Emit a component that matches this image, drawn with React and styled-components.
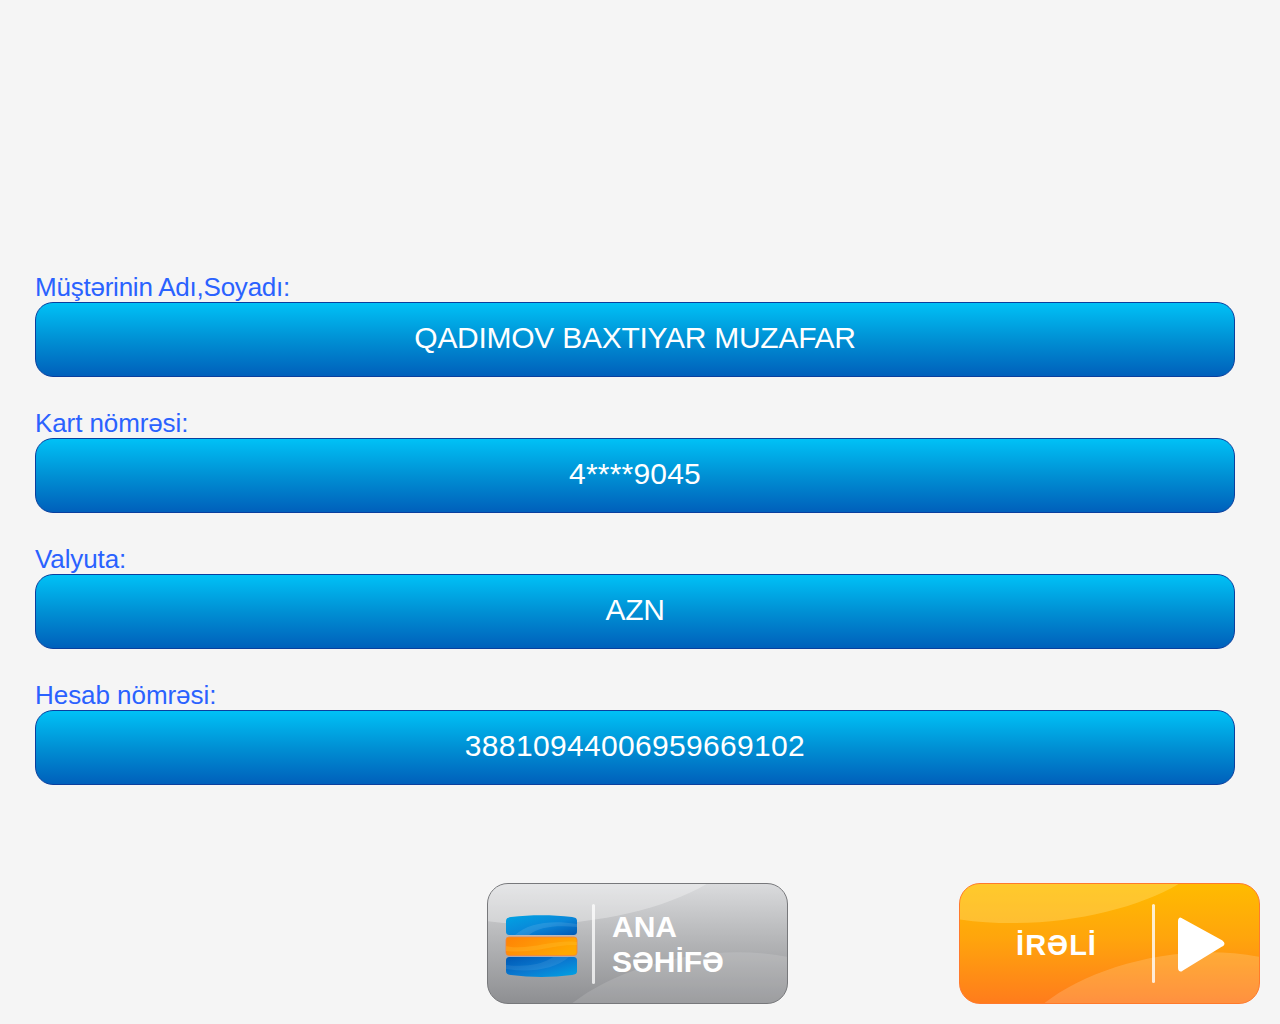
import React from "react";
import styled, { createGlobalStyle } from "styled-components";

const GlobalStyle = createGlobalStyle`
  html, body {
    margin: 0;
    padding: 0;
    background: #f5f5f5;
  }
  body {
    font-family: "Liberation Sans", Arial, sans-serif;
  }
`;

const Page = styled.div`
  width: 1280px;
  height: 1024px;
  overflow: hidden;
  display: flex;
  flex-direction: column;
  padding: 272px 20px 20px 35px;
  box-sizing: border-box;
`;

const Form = styled.div`
  display: flex;
  flex-direction: column;
  gap: 31px;
`;

const Field = styled.div`
  display: flex;
  flex-direction: column;
  width: 1200px;
`;

const Label = styled.div`
  height: 30px;
  line-height: 30px;
  font-size: 26px;
  letter-spacing: ${(p) => p.$track || 0}px;
  color: #2a62ff;
`;

const Value = styled.div`
  height: 75px;
  box-sizing: border-box;
  display: flex;
  align-items: center;
  justify-content: center;
  padding-bottom: 3px;
  border: 1px solid #0a3f9e;
  border-radius: 18px;
  background: linear-gradient(to bottom, #00c1f6 0%, #0090d4 50%, #0060bb 100%);
  color: #fff;
  font-size: 30px;
  letter-spacing: ${(p) => p.$track || 0}px;
`;

const Actions = styled.div`
  margin-top: auto;
  display: flex;
  justify-content: flex-end;
  gap: 171px;
`;

const BigButton = styled.div`
  position: relative;
  overflow: hidden;
  width: 301px;
  height: 121px;
  box-sizing: border-box;
  border-radius: 21px;
  border: 1px solid ${(p) => (p.$orange ? "#ff7a2c" : "#77787b")};
  background: ${(p) =>
    p.$orange
      ? "linear-gradient(to bottom, #ffbb00 0%, #ffa50c 45%, #ff7c1c 100%)"
      : "linear-gradient(to bottom, #dadbdd 0%, #b6b7b9 45%, #8e8f92 100%)"};
  display: flex;
  align-items: center;
  color: #fff;
  font-weight: bold;
`;

const Gloss = styled.svg`
  position: absolute;
  inset: 0;
  width: 100%;
  height: 100%;
`;

const Divider = styled.div`
  position: relative;
  flex: none;
  width: 3px;
  height: ${(p) => p.$h}px;
  margin: ${(p) => p.$m};
  border-radius: 2px;
  background: rgba(255, 255, 255, ${(p) => p.$a});
`;

const HomeIcon = styled.svg`
  position: relative;
  flex: none;
  width: 73px;
  height: 62px;
  margin-left: 17px;
  margin-top: 5px;
`;

const HomeText = styled.div`
  position: relative;
  font-size: 30px;
  line-height: 35px;
  margin-left: 17px;
  margin-top: 1px;
`;

const NextText = styled.div`
  position: relative;
  flex: none;
  width: 193px;
  text-align: center;
  font-size: 29px;
  letter-spacing: 1px;
  margin-top: 4px;
`;

const PlayIcon = styled.svg`
  position: relative;
  flex: none;
  width: 50px;
  height: 56px;
  margin-left: 23px;
`;

const rows = [
  { label: "Müştərinin Adı,Soyadı:", labelTrack: -0.23, value: "QADIMOV BAXTIYAR MUZAFAR", track: -0.27 },
  { label: "Kart nömrəsi:", labelTrack: -0.1, value: "4****9045", track: 0.2 },
  { label: "Valyuta:", labelTrack: -0.1, value: "AZN", track: -0.3 },
  { label: "Hesab nömrəsi:", labelTrack: -0.05, value: "38810944006959669102", track: 0.33 },
];

function StackIcon() {
  return (
    <HomeIcon viewBox="0 0 73 62">
      <defs>
        <linearGradient id="blueA" x1="0" y1="0" x2="1" y2="1">
          <stop offset="0" stopColor="#00a4e4" />
          <stop offset="0.55" stopColor="#0a86d8" />
          <stop offset="1" stopColor="#0058b4" />
        </linearGradient>
        <linearGradient id="blueB" x1="0" y1="0" x2="1" y2="1">
          <stop offset="0" stopColor="#0058b4" />
          <stop offset="0.55" stopColor="#0a7cd2" />
          <stop offset="1" stopColor="#00a4e4" />
        </linearGradient>
        <linearGradient id="amber" x1="0" y1="0" x2="1" y2="0.4">
          <stop offset="0" stopColor="#ff8205" />
          <stop offset="0.5" stopColor="#ff9606" />
          <stop offset="1" stopColor="#ffa800" />
        </linearGradient>
      </defs>
      <path d="M1 6 C1 3 3 2.5 6 2 C26 -0.5 47 -0.5 67 2 C70 2.5 72 3 72 6 V16 C72 19 71 20 68 20 H5 C2 20 1 19 1 16 Z" fill="url(#blueA)" />
      <path d="M10 20 C24 7 48 5 72 9 V12 C50 10 34 12 24 20 Z" fill="#ffffff" opacity="0.1" />
      <rect x="1" y="22" width="71" height="18.5" rx="3" fill="url(#amber)" stroke="#f5843a" strokeWidth="0.8" />
      <path d="M1 31 C24 36 48 24 72 27 V30 C50 29 30 39 1 36 Z" fill="#ffc233" opacity="0.3" />
      <path d="M1 46 C1 43 2 42 5 42 H68 C71 42 72 43 72 46 V56 C72 59 70 59.5 67 60 C47 62.5 26 62.5 6 60 C3 59.5 1 59 1 56 Z" fill="url(#blueB)" />
      <path d="M1 50 C20 52 36 50 48 42 H64 C50 54 26 58 1 54 Z" fill="#ffffff" opacity="0.08" />
    </HomeIcon>
  );
}

export default function App() {
  return (
    <>
      <GlobalStyle />
      <Page>
        <Form>
          {rows.map((row) => (
            <Field key={row.label}>
              <Label $track={row.labelTrack}>{row.label}</Label>
              <Value $track={row.track}>{row.value}</Value>
            </Field>
          ))}
        </Form>
        <Actions>
          <BigButton>
            <Gloss viewBox="0 0 301 121" preserveAspectRatio="none">
              <path d="M0 0 H220 C170 30 80 48 0 38 Z" fill="#ffffff" opacity="0.3" />
              <path d="M85 121 C130 85 220 58 301 74 V121 Z" fill="#ffffff" opacity="0.13" />
            </Gloss>
            <StackIcon />
            <Divider $h={80} $m="0 0 0 14px" $a={0.75} />
            <HomeText>
              ANA
              <br />
              SƏHİFƏ
            </HomeText>
          </BigButton>
          <BigButton $orange>
            <Gloss viewBox="0 0 301 121" preserveAspectRatio="none">
              <path d="M0 0 H220 C170 30 80 48 0 36 Z" fill="#ffe98a" opacity="0.32" />
              <path d="M85 121 C130 85 220 58 301 74 V121 Z" fill="#ffffff" opacity="0.16" />
            </Gloss>
            <NextText>İRƏLİ</NextText>
            <Divider $h={79} $m="0 0 0 -1px" $a={0.8} />
            <PlayIcon viewBox="0 0 50 56">
              <path d="M3 3 L44 25.5 C46 27 46 28.5 44 29.5 L4 54 C2 55 1 54 1 52 V5 C1 3 2 2 3 3 Z" fill="#fff" stroke="#fff" strokeWidth="2" strokeLinejoin="round" />
            </PlayIcon>
          </BigButton>
        </Actions>
      </Page>
    </>
  );
}
